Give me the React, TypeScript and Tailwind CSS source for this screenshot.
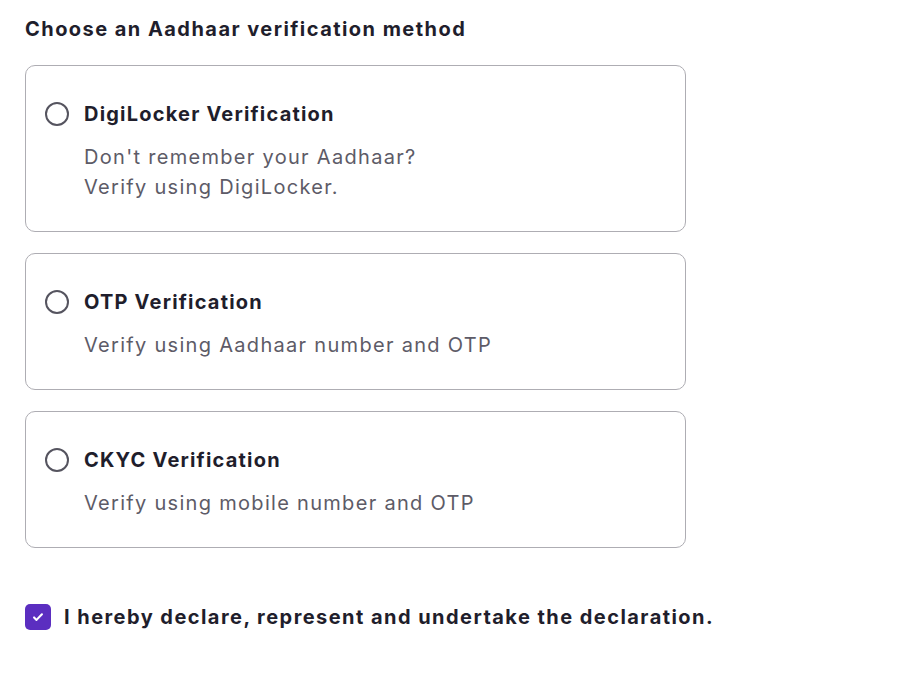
import { useState } from "react";

type Method = {
  id: string;
  title: string;
  lines: string[];
};

const methods: Method[] = [
  {
    id: "digilocker",
    title: "DigiLocker Verification",
    lines: ["Don't remember your Aadhaar?", "Verify using DigiLocker."],
  },
  { id: "otp", title: "OTP Verification", lines: ["Verify using Aadhaar number and OTP"] },
  { id: "ckyc", title: "CKYC Verification", lines: ["Verify using mobile number and OTP"] },
];

export default function App() {
  const [selected, setSelected] = useState<string | null>(null);
  const [agreed, setAgreed] = useState(true);

  return (
    <div
      className="min-h-screen bg-white pl-[25px] pt-[15px] text-[#1f1e2c]"
      style={{ fontFamily: "Inter, 'Noto Sans', sans-serif" }}
    >
      <h1 className="mb-[22px] text-[20px] font-bold leading-7 tracking-[1.45px]">
        Choose an Aadhaar verification method
      </h1>

      <div className="flex w-[661px] flex-col gap-[21px]">
        {methods.map((m) => (
          <button
            key={m.id}
            type="button"
            onClick={() => setSelected(m.id)}
            className="flex flex-col rounded-[10px] border border-[#aeadb3] bg-white pb-[29px] pl-[19px] pt-9 text-left"
          >
            <div className="flex items-center gap-[15px]">
              <span className="flex h-6 w-6 items-center justify-center rounded-full border-2 border-[#55545f]">
                {selected === m.id && <span className="h-3 w-3 rounded-full bg-[#5b2ec0]" />}
              </span>
              <span className="text-[20px] font-bold leading-6 tracking-[1.2px]">{m.title}</span>
            </div>
            <div className="mt-4 pl-[39px] text-[20px] leading-[30px] tracking-[1.3px] text-[#5d5b67]">
              {m.lines.map((l) => (
                <p key={l}>{l}</p>
              ))}
            </div>
          </button>
        ))}
      </div>

      <label className="mt-[55px] flex cursor-pointer items-center gap-[13px]">
        <button
          type="button"
          onClick={() => setAgreed((v) => !v)}
          className={`flex h-[26px] w-[26px] items-center justify-center rounded-[5px] ${
            agreed ? "bg-[#5b2ec0]" : "border-2 border-[#55545f] bg-white"
          }`}
        >
          {agreed && (
            <svg viewBox="0 0 16 16" className="h-[14px] w-[14px]" fill="none">
              <path d="M3.5 8.5l2.8 2.8 6.2-6.4" stroke="white" strokeWidth="2.4" strokeLinecap="round" strokeLinejoin="round" />
            </svg>
          )}
        </button>
        <span className="text-[20px] font-bold leading-7 tracking-[1.45px]">
          I hereby declare, represent and undertake the declaration.
        </span>
      </label>
    </div>
  );
}
